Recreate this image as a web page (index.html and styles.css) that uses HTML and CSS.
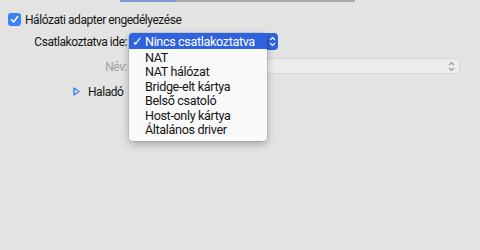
FILE: index.html
```html
<!DOCTYPE html>
<html lang="hu">

<head>
    <meta charset="UTF-8">
    <title>Hálózat</title>
    <link rel="stylesheet" href="styles.css">
</head>

<body>
    <div class="tabbar">
        <div class="tab-on"></div>
        <div class="tab-off"></div>
    </div>

    <div class="check-row">
        <span class="checkbox">
            <svg width="9" height="9" viewBox="0 0 9 9"><path d="M1.5 4.8 L3.6 7 L7.6 1.8" fill="none" stroke="#fff" stroke-width="1.6" stroke-linecap="round" stroke-linejoin="round"/></svg>
        </span>
        <span>Hálózati adapter engedélyezése</span>
    </div>

    <div class="row row-attach">
        <label class="label">Csatlakoztatva ide:</label>
        <div class="popup">
            <span class="popup-arrows">
                <svg width="7" height="11" viewBox="0 0 7 11"><path d="M1 4 L3.5 1.5 L6 4 M1 7 L3.5 9.5 L6 7" fill="none" stroke="#fff" stroke-width="1.2"/></svg>
            </span>
            <!-- nyitott menü a gomb fölött -->
            <ul class="menu">
                <li class="menu-item selected"><span class="tick">✓</span>Nincs csatlakoztatva</li>
                <li class="menu-item">NAT</li>
                <li class="menu-item">NAT hálózat</li>
                <li class="menu-item">Bridge-elt kártya</li>
                <li class="menu-item">Belső csatoló</li>
                <li class="menu-item">Host-only kártya</li>
                <li class="menu-item">Általános driver</li>
            </ul>
        </div>
    </div>

    <div class="row row-name">
        <label class="label dim">Név:</label>
        <div class="field">
            <svg width="7" height="11" viewBox="0 0 7 11"><path d="M1 4 L3.5 1.5 L6 4 M1 7 L3.5 9.5 L6 7" fill="none" stroke="#9a9a9a" stroke-width="1.1"/></svg>
        </div>
    </div>

    <div class="advanced">
        <svg class="disclosure" width="7" height="9" viewBox="0 0 7 9"><path d="M1 1 L6 4.5 L1 8 Z" fill="none" stroke="#3a86f0" stroke-width="1.4" stroke-linejoin="round"/></svg>
        <span>Haladó</span>
    </div>
</body>

</html>
```

FILE: styles.css
```css
html {
    background-color: #e3e3e3;
}

body {
    margin: 0;
    min-height: 250px;
    background-color: #e3e3e3;
    font-family: Roboto, "Liberation Sans", Arial, sans-serif;
    font-size: 12px;
    letter-spacing: -0.45px;
    color: #151515;
}

.tabbar {
    display: flex;
    margin-left: 120px;
    width: 235px;
    height: 2px;
}

.tab-on {
    width: 56px;
    background-color: #7f98d6;
}

.tab-off {
    flex: 1;
    background-color: #a9a9a9;
}

.check-row {
    display: flex;
    align-items: center;
    gap: 4px;
    margin: 10px 0 0 8px;
    height: 13px;
    padding-top: 1px;
}

.checkbox {
    width: 13px;
    height: 13px;
    border-radius: 3px;
    background-color: #3d82f4;
    display: flex;
    align-items: center;
    justify-content: center;
}

.row {
    display: flex;
    align-items: center;
    gap: 2px;
}

.row-attach {
    margin-top: 7px;
    height: 17px;
}

.row-name {
    margin-top: 8px;
    height: 16px;
}

.label {
    width: 127px;
    text-align: right;
    padding-top: 1px;
}

.dim {
    color: #a0a0a0;
}

.popup {
    position: relative;
    width: 149px;
    height: 17px;
    border-radius: 4px;
    background-color: #2f62de;
    display: flex;
    justify-content: flex-end;
    align-items: center;
}

.popup-arrows {
    width: 12px;
    display: flex;
    justify-content: center;
}

.menu {
    position: absolute;
    top: 0;
    left: 0;
    width: 138px;
    margin: 0;
    padding: 0 0 4px 0;
    list-style: none;
    background-color: #f9f9f9;
    border-radius: 4px;
    box-shadow: 0 3px 9px rgba(0, 0, 0, 0.28), 0 0 0 0.5px rgba(0, 0, 0, 0.15);
    font-size: 12.6px;
    letter-spacing: -0.35px;
    z-index: 2;
}

.menu-item {
    position: relative;
    height: 14.4px;
    line-height: 14.4px;
    padding-left: 16px;
    white-space: nowrap;
}

.menu-item.selected {
    height: 16px;
    line-height: 17px;
    margin-bottom: 2px;
    background-color: #2f62de;
    color: #fff;
    border-radius: 4px 0 0 0;
}

.tick {
    position: absolute;
    left: 3px;
    top: 0;
    font-size: 13px;
}

.field {
    width: 331px;
    height: 16px;
    background-color: #ececec;
    border: 1px solid #d6d6d6;
    border-radius: 3px;
    box-sizing: border-box;
    display: flex;
    justify-content: flex-end;
    align-items: center;
    padding-right: 4px;
}

.advanced {
    display: flex;
    align-items: center;
    gap: 8px;
    margin: 10px 0 0 73px;
    height: 15px;
}
```
